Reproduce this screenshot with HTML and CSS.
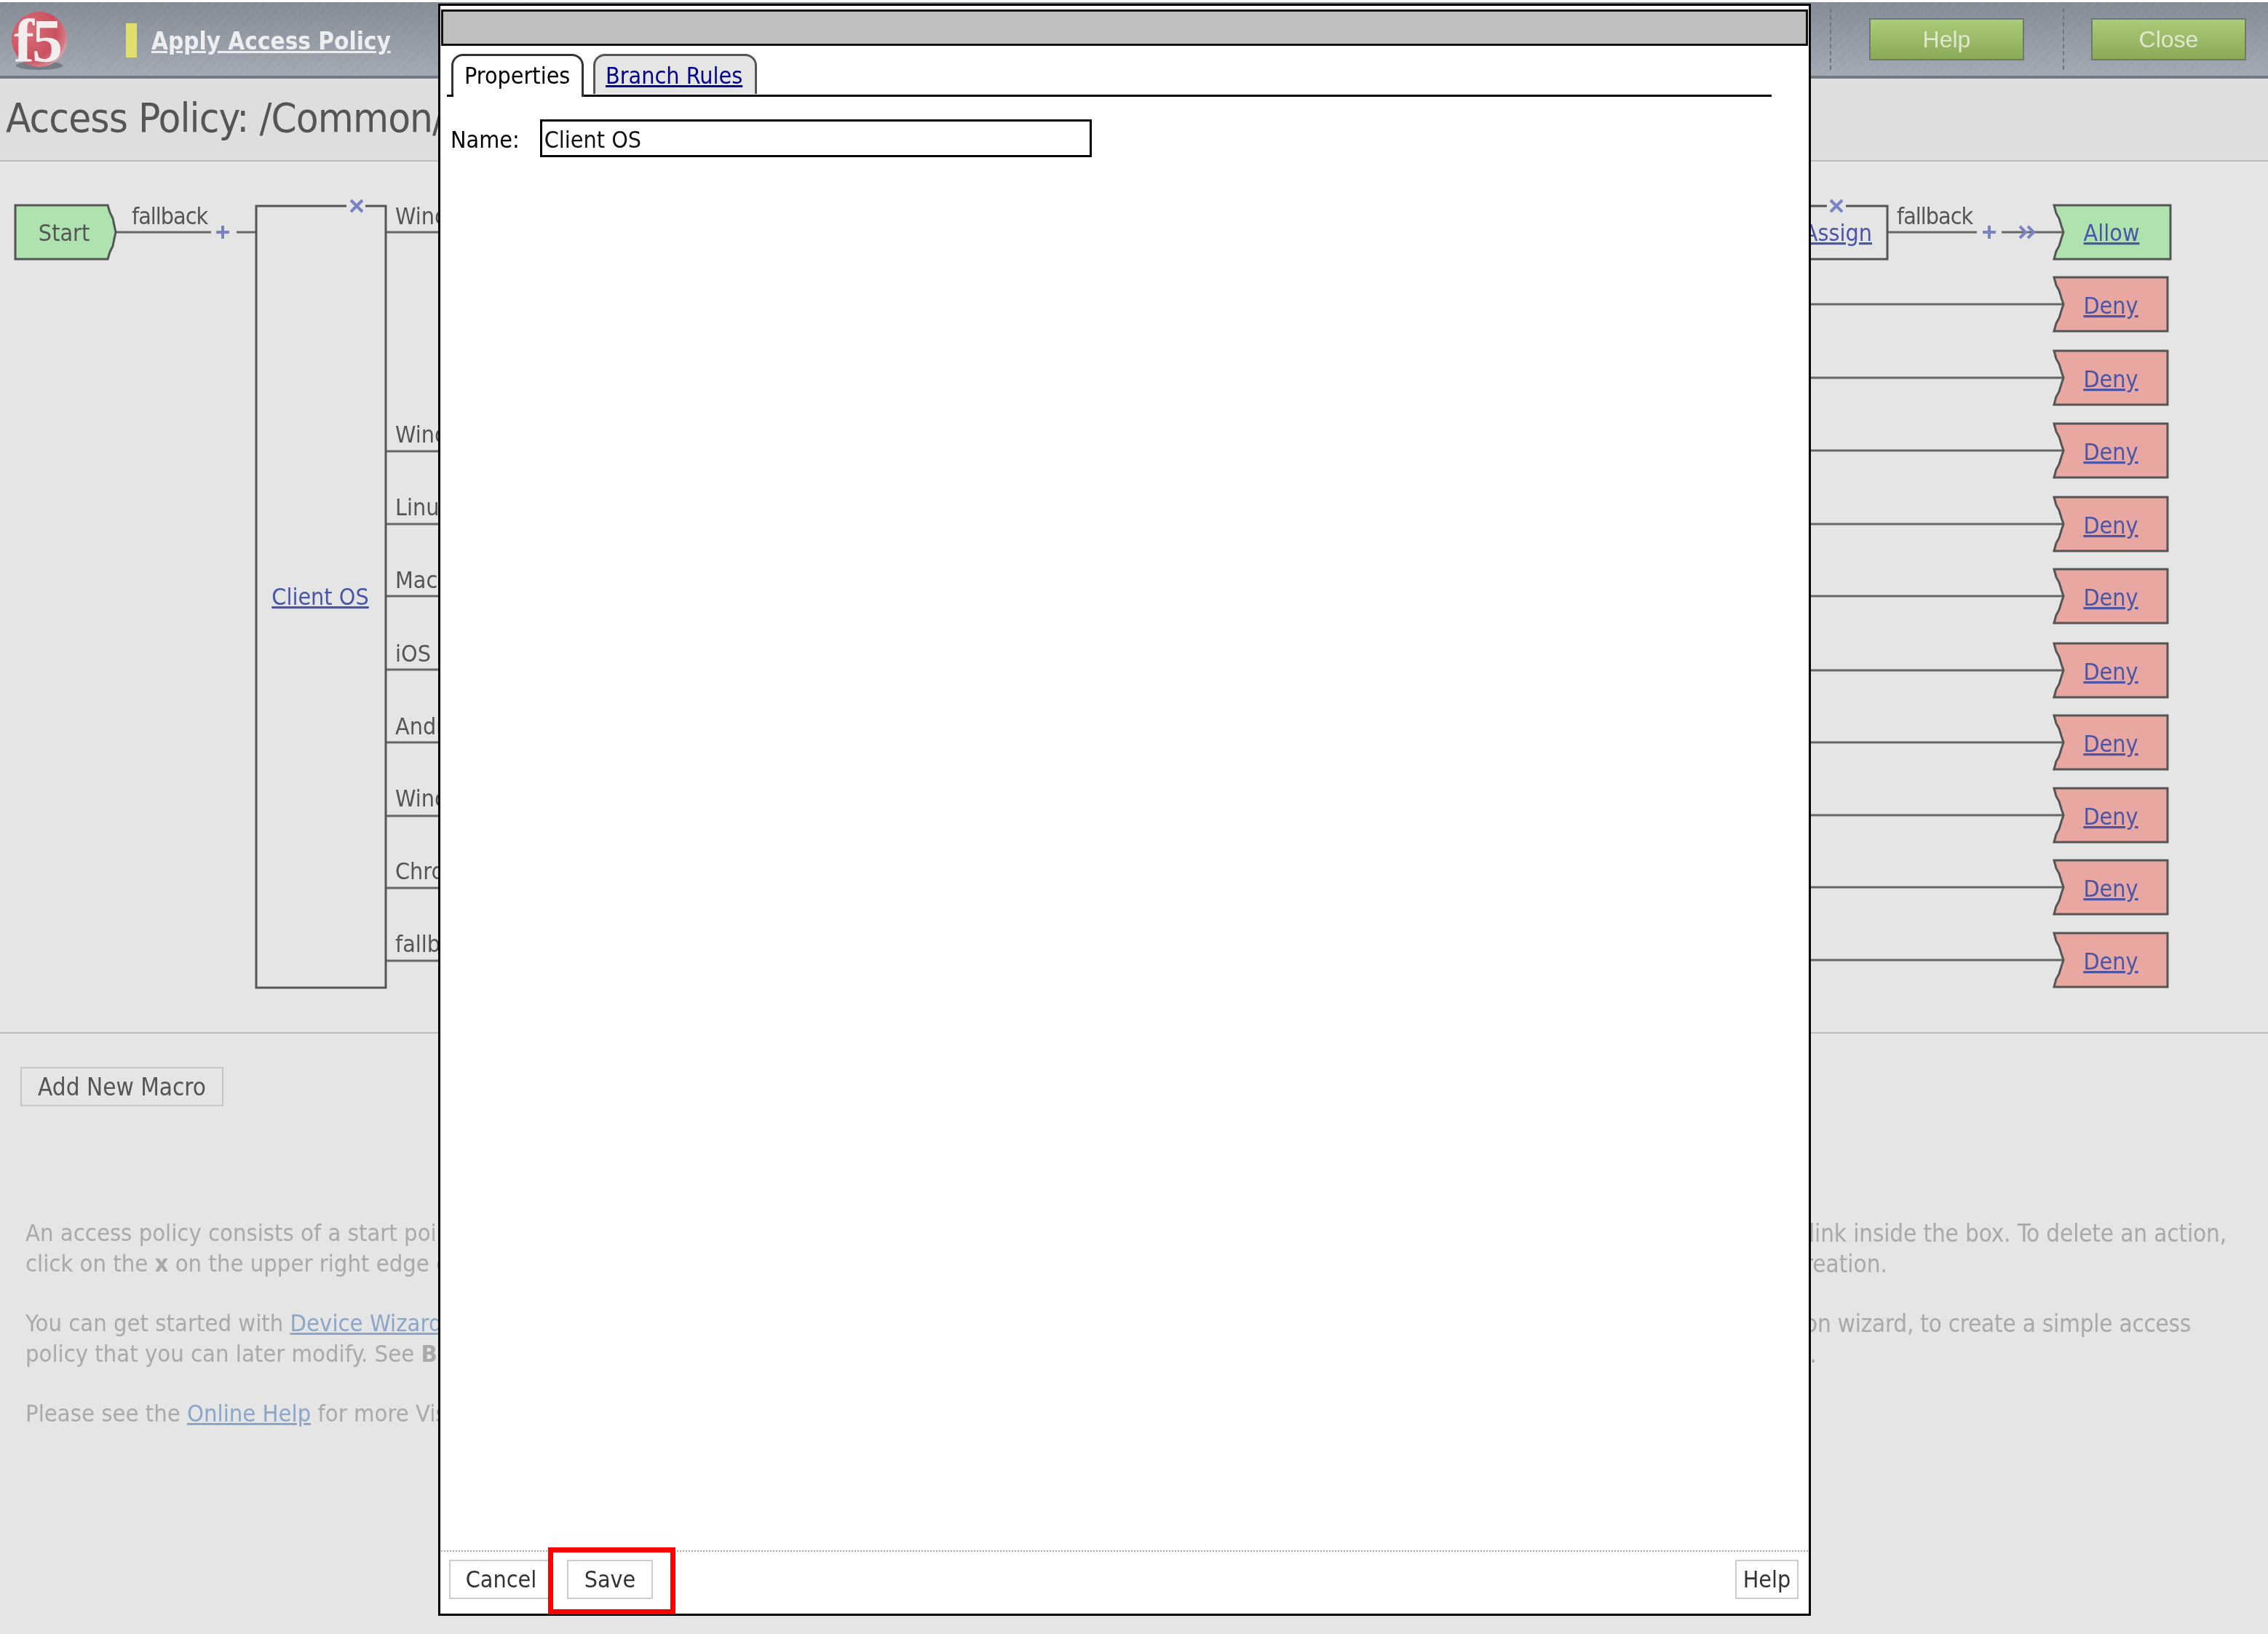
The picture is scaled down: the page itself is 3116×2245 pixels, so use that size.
FILE: index.html
```html
<!DOCTYPE html>
<html lang="en">
<head>
    <meta charset="UTF-8">
    <title>Access Policy</title>
    <link rel="stylesheet" href="styles.css">
</head>
<body>
    <div class="page">
        <header class="topbar">
            <svg class="logo" viewBox="0 3 100 100" width="100" height="100">
                <defs>
                    <radialGradient id="ball" cx="0.3" cy="0.35" r="0.85">
                        <stop offset="0" stop-color="#d8707a"/>
                        <stop offset="0.6" stop-color="#c9505f"/>
                        <stop offset="0.8" stop-color="#d67a84"/>
                        <stop offset="1" stop-color="#efe6e6"/>
                    </radialGradient>
                </defs>
                <ellipse cx="54" cy="90" rx="32" ry="6" fill="#767c85"/>
                <circle cx="54" cy="54" r="38" fill="url(#ball)"/>
                <text class="logo-text" x="19" y="85">f5</text>
            </svg>
            <span class="topbar-mark"></span>
            <a class="topbar-title" href="#">Apply Access Policy</a>
            <span class="topbar-sep topbar-sep-first"></span>
            <button class="green-btn">Help</button>
            <span class="topbar-sep"></span>
            <button class="green-btn">Close</button>
        </header>

        <div class="title-band">
            <h1>Access Policy: /Common/</h1>
        </div>

        <svg class="diagram" viewBox="0 222 3116 1196" width="3116" height="1196">
            <g class="wire">
                <path d="M158 319H290M325 319H352"/>
                <path d="M530 319H610M530 620H610M530 720H610M530 819H610M530 920H610M530 1020H610M530 1121H610M530 1220H610M530 1320H610"/>
                <path d="M2593 319H2716M2750 319H2836"/>
                <path d="M2480 418H2836M2480 519H2836M2480 619H2836M2480 720H2836M2480 819H2836M2480 921H2836M2480 1020H2836M2480 1120H2836M2480 1219H2836M2480 1319H2836"/>
            </g>

            <polygon class="node node-green" points="21,282 148,282 151,292 155,300 157,310 159,319 157,328 155,338 151,346 148,356 21,356"/>
            <text class="label" x="88" y="331" text-anchor="middle">Start</text>

            <rect class="box" x="352" y="283" width="178" height="1074"/>
            <a href="#"><text class="link" x="440" y="831" text-anchor="middle">Client OS</text></a>
            <rect class="box-gap" x="476" y="278" width="26" height="10"/>

            <rect class="box" x="2440" y="283" width="153" height="73"/>
            <a href="#"><text class="link" x="2572" y="331" text-anchor="end">Assign</text></a>
            <rect class="box-gap" x="2510" y="278" width="26" height="10"/>

            <g class="blue-mark">
                <path d="M482 275L498 291M498 275L482 291"/>
                <path d="M2515 275L2531 291M2531 275L2515 291"/>
                <path d="M306 310V328M297 319H315"/>
                <path d="M2733 310V328M2724 319H2742"/>
                <path d="M2775 311L2783 319L2775 327M2786 311L2794 319L2786 327"/>
            </g>

            <text class="label label-tight" x="181" y="308">fallback</text>
            <text class="label label-tight" x="2606" y="308">fallback</text>

            <text class="label" x="543" y="308">Windows RT</text>
            <text class="label" x="543" y="608">Windows 10</text>
            <text class="label" x="543" y="708">Linux</text>
            <text class="label" x="543" y="808">Mac OS</text>
            <text class="label" x="543" y="909">iOS</text>
            <text class="label" x="543" y="1009">Android</text>
            <text class="label" x="543" y="1108">Windows Phone</text>
            <text class="label" x="543" y="1208">Chrome OS</text>
            <text class="label" x="543" y="1308">fallback</text>

            <polygon class="node node-green" points="2822,282 2982,282 2982,356 2822,356 2825,345 2829,338 2832,328 2835,319 2832,310 2829,300 2825,293"/>
            <a href="#"><text class="link" x="2901" y="331" text-anchor="middle">Allow</text></a>

            <g id="denyNode">
                <polygon class="node node-red" points="2822,381 2978,381 2978,455 2822,455 2825,444 2829,437 2832,427 2835,418 2832,409 2829,399 2825,392"/>
                <a href="#"><text class="link" x="2900" y="431" text-anchor="middle">Deny</text></a>
            </g>
            <use href="#denyNode" y="101"/>
            <use href="#denyNode" y="201"/>
            <use href="#denyNode" y="302"/>
            <use href="#denyNode" y="401"/>
            <use href="#denyNode" y="503"/>
            <use href="#denyNode" y="602"/>
            <use href="#denyNode" y="702"/>
            <use href="#denyNode" y="801"/>
            <use href="#denyNode" y="901"/>
        </svg>

        <section class="lower">
            <button class="plain-btn macro-btn">Add New Macro</button>
            <div class="help-text">
                <div class="help-line">
                    <span>An access policy consists of a start point</span>
                    <span class="tail tail-a">link inside the box. To delete an action,</span>
                </div>
                <div class="help-line para-end">
                    <span>click on the <b>x</b> on the upper right edge of</span>
                    <span class="tail tail-b">creation.</span>
                </div>
                <div class="help-line">
                    <span>You can get started with <a href="#">Device Wizard</a></span>
                    <span class="tail tail-c">on wizard, to create a simple access</span>
                </div>
                <div class="help-line para-end">
                    <span>policy that you can later modify. See <b>Branch</b></span>
                    <span class="tail tail-d">.</span>
                </div>
                <div class="help-line">
                    <span>Please see the <a href="#">Online Help</a> for more Visual</span>
                </div>
            </div>
        </section>
    </div>

    <div class="modal">
        <div class="modal-title"></div>
        <div class="tabs">
            <div class="tab tab-active">Properties</div>
            <div class="tab tab-other"><a href="#">Branch Rules</a></div>
        </div>
        <div class="name-row">
            <label for="nameInput">Name:</label>
            <input id="nameInput" type="text" value="Client OS">
        </div>
        <div class="modal-footer">
            <button class="plain-btn cancel-btn">Cancel</button>
            <button class="plain-btn save-btn">Save</button>
            <button class="plain-btn help-btn">Help</button>
            <div class="highlight"></div>
        </div>
    </div>
</body>
</html>
```

FILE: styles.css
```css
* {
    box-sizing: border-box;
}

body {
    margin: 0;
    background-color: #ffffff;
    font-family: "DejaVu Sans", sans-serif;
    font-stretch: condensed;
    font-size: 32px;
    overflow: hidden;
}

.page {
    position: relative;
    width: 3116px;
    height: 2242px;
    margin-top: 3px;
    background-color: #e5e5e5;
    overflow: hidden;
    filter: blur(0.6px);
}

.topbar {
    display: flex;
    align-items: center;
    height: 105px;
    padding-right: 30px;
    background:
        repeating-linear-gradient(135deg, rgba(255, 255, 255, 0.03) 0 3px, transparent 3px 9px),
        linear-gradient(#848b95, #a3a9b2);
    border-bottom: 4px solid #737a83;
}

.logo {
    flex: none;
    align-self: flex-start;
}

.logo-text {
    font-family: "Liberation Serif", serif;
    font-stretch: normal;
    font-weight: bold;
    font-size: 84px;
    letter-spacing: -3px;
    fill: #f3eeee;
}

.topbar-mark {
    width: 15px;
    height: 47px;
    margin: 3px 0 0 73px;
    background-color: #dfdf6e;
}

.topbar-title {
    margin: 6px 0 0 20px;
    font-size: 33px;
    font-weight: bold;
    color: #eceef0;
}

.topbar-sep {
    width: 0;
    height: 85px;
    margin: 0 37px 0 53px;
    border-left: 2px dashed #6f767f;
}

.topbar-sep-first {
    margin: 0 52px 0 auto;
}

.green-btn {
    width: 213px;
    height: 58px;
    padding: 2px 0 0;
    font-family: "Liberation Sans", sans-serif;
    font-size: 32px;
    color: #dfe7cf;
    background: linear-gradient(#abcb79, #8aaa58);
    border: 2px solid #6e7a70;
}

.title-band {
    height: 114px;
    background-color: #dedede;
    border-bottom: 2px solid #bcbcbc;
}

h1 {
    margin: 0;
    padding: 21px 0 0 8px;
    font-size: 56px;
    font-weight: normal;
    letter-spacing: -0.9px;
    line-height: 66px;
    color: #555555;
}

.diagram {
    display: block;
}

.wire path {
    fill: none;
    stroke: #666666;
    stroke-width: 3;
}

.node {
    stroke: #555555;
    stroke-width: 3;
}

.node-green {
    fill: #aee3b0;
}

.node-red {
    fill: #e8a7a1;
}

.box {
    fill: #e5e5e5;
    stroke: #555555;
    stroke-width: 3;
}

.box-gap {
    fill: #e5e5e5;
}

.blue-mark path {
    fill: none;
    stroke: #7883c4;
    stroke-width: 4;
}

.label {
    font-size: 32px;
    fill: #555555;
}

.label-tight {
    letter-spacing: -1px;
}

.link {
    font-size: 32px;
    fill: #4a55a8;
    text-decoration: underline;
}

.lower {
    border-top: 2px solid #bcbcbc;
    padding: 46px 0 0 28px;
}

.plain-btn {
    height: 54px;
    padding: 0;
    font: inherit;
    color: #333333;
    background-color: #ffffff;
    border: 2px solid #cccccc;
}

.macro-btn {
    display: block;
    width: 279px;
    font-size: 33px;
    color: #555555;
    background-color: #e5e5e5;
    border-color: #c6c6c6;
}

.help-text {
    margin: 154px 0 0 7px;
    font-size: 32.5px;
    line-height: 41.5px;
    color: #a9a9a9;
}

.help-text a {
    color: #8ba6c9;
}

.help-line {
    display: flex;
    justify-content: space-between;
    white-space: nowrap;
}

.para-end {
    margin-bottom: 41px;
}

.tail {
    font-size: 33px;
}

.tail-a {
    margin-right: 57px;
    letter-spacing: -0.15px;
}

.tail-b {
    margin-right: 523px;
}

.tail-c {
    margin-right: 106px;
    letter-spacing: -0.25px;
}

.tail-d {
    margin-right: 620px;
}

.modal {
    position: absolute;
    left: 602px;
    top: 5px;
    width: 1886px;
    height: 2215px;
    display: flex;
    flex-direction: column;
    padding: 5px 1px 0;
    background-color: #ffffff;
    border: 3px solid #000000;
    filter: blur(0.6px);
}

.modal-title {
    height: 50px;
    background-color: #bfbfbf;
    border: 3px solid #111111;
}

.tabs {
    display: flex;
    gap: 13px;
    height: 59px;
    margin: 11px 50px 0 14px;
    border-bottom: 3px solid #000000;
}

.tab {
    position: relative;
    height: 59px;
    line-height: 40px;
    border: 3px solid #333333;
    border-bottom: none;
    border-radius: 16px 16px 0 0;
    background-color: #ffffff;
}

.tab-active {
    width: 182px;
    padding: 7px 0 0 15px;
}

/* little foot where the active tab meets the rule */
.tab-active::before {
    content: "";
    position: absolute;
    left: -9px;
    bottom: 0;
    width: 9px;
    height: 3px;
    background-color: #000000;
}

.tab-other {
    width: 225px;
    height: 55px;
    padding: 7px 0 0 14px;
    background-color: #e5e5e5;
    border-color: #555555;
}

.tab a {
    color: #00008b;
}

.name-row {
    display: flex;
    align-items: center;
    gap: 28px;
    margin: 31px 0 0 13px;
}

.name-row label {
    padding-top: 3px;
}

.name-row input {
    width: 758px;
    height: 52px;
    padding: 3px 3px 0;
    font: inherit;
    color: #111111;
    border: 3px solid #000000;
}

.modal-footer {
    position: relative;
    display: flex;
    gap: 19px;
    margin-top: auto;
    height: 87px;
    padding: 11px 13px 0 11px;
    border-top: 2px dotted #aaaaaa;
}

.cancel-btn {
    width: 143px;
}

.save-btn {
    width: 118px;
}

.help-btn {
    width: 87px;
    margin-left: auto;
}

.highlight {
    position: absolute;
    left: 147px;
    top: -6px;
    width: 175px;
    height: 92px;
    border: 7px solid #ff0000;
}
```
